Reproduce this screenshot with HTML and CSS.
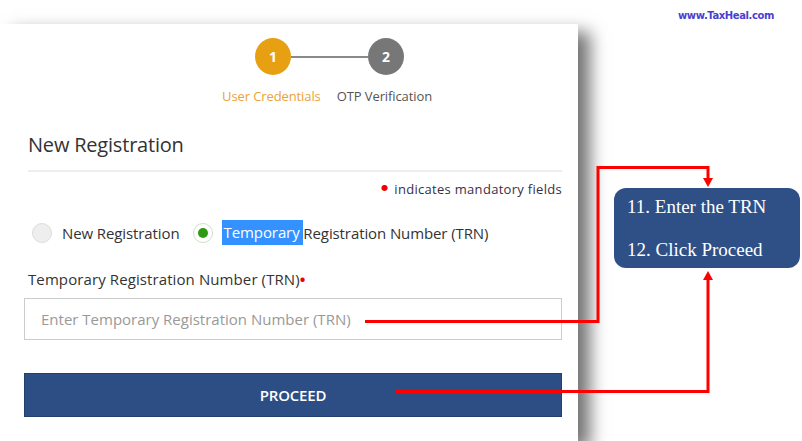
FILE: index.html
```html
<!DOCTYPE html>
<html>
<head>
<meta charset="utf-8">
<link rel="stylesheet" href="styles.css">
</head>
<body>
<div class="page">
  <div class="card">
    <div class="stepper">
      <div class="circles">
        <span class="circle active">1</span>
        <span class="bar"></span>
        <span class="circle">2</span>
      </div>
      <div class="labels">
        <span class="lbl active">User Credentials</span>
        <span class="lbl">OTP Verification</span>
      </div>
    </div>
    <h2 class="title">New Registration</h2>
    <p class="mandatory"><span class="dot">●</span> indicates mandatory fields</p>
    <div class="radios">
      <label class="radio"><span class="rb"></span>New Registration</label>
      <label class="radio"><span class="rb checked"></span><span class="hl">Temporary </span>Registration Number (TRN)</label>
    </div>
    <div class="field-label">Temporary Registration Number (TRN)<span class="req">•</span></div>
    <div class="input">Enter Temporary Registration Number (TRN)</div>
    <div class="button">PROCEED</div>
  </div>

  <div class="watermark">www.TaxHeal.com</div>

  <div class="callout">
    <p>11. Enter the TRN</p>
    <p>12. Click Proceed</p>
  </div>

  <svg class="arrows" width="802" height="441" viewBox="0 0 802 441">
    <path d="M365 321.5 H598 V167.5 H708 V180" fill="none" stroke="#ff0000" stroke-width="3"/>
    <polygon points="703,178 713,178 708,187" fill="#ff0000"/>
    <path d="M395 391.5 H708 V279" fill="none" stroke="#ff0000" stroke-width="3"/>
    <polygon points="703,280 713,280 708,271" fill="#ff0000"/>
  </svg>
</div>
</body>
</html>
```
FILE: styles.css
```css
* { box-sizing: border-box; }
html, body { margin: 0; padding: 0; background: #fff; }
body { width: 802px; height: 441px; overflow: hidden; font-family: "Open Sans", "DejaVu Sans", sans-serif; }
.page { position: relative; width: 802px; height: 441px; padding-top: 24px; }

.card {
  width: 578px;
  height: 417px;
  background: #fff;
  padding: 14px 16px 0 24px;
  box-shadow: 12px 8px 16px rgba(0,0,0,0.55);
}

.stepper { display: flex; flex-direction: column; }
.circles { display: flex; align-items: center; margin-left: 231px; }
.circle {
  width: 36px; height: 37px; border-radius: 50%;
  background: #777; color: #fff;
  display: flex; align-items: center; justify-content: center;
  font-size: 14px; font-weight: 700;
}
.circle.active { background: #e8a013; }
.bar { width: 77px; height: 2px; background: #8a8a8a; }
.labels { display: flex; gap: 16px; margin-left: 198px; margin-top: 12px; }
.lbl { font-size: 13px; color: #555; letter-spacing: -0.1px; }
.lbl.active { color: #eba23a; }

.title {
  margin: 26px 0 0 4px;
  padding-bottom: 12px;
  border-bottom: 2px solid #eeeeee;
  font-size: 20px; font-weight: 400; color: #333;
  letter-spacing: -0.2px;
}
.mandatory {
  margin: 8px 0 0; text-align: right;
  font-size: 13px; color: #3a2f45; letter-spacing: 0.3px;
}
.dot { color: #e00; font-size: 8px; vertical-align: 4px; margin-right: 2px; }

.radios { display: flex; gap: 13px; margin: 22px 0 0 8px; align-items: center; }
.radio { display: flex; align-items: center; font-size: 15px; color: #333; letter-spacing: -0.1px; }
.rb {
  width: 20px; height: 20px; border-radius: 50%;
  background: #eee; border: 1px solid #ddd;
  margin-right: 10px; display: inline-flex; align-items: center; justify-content: center;
}
.rb.checked { background: #fff; border: 1px solid #cfe0c8; margin-right: 9px; }
.rb.checked::after { content: ""; width: 10px; height: 10px; border-radius: 50%; background: #2e9a14; }
.hl { background: #3392ff; color: #fff; padding: 2px 0 3px 2px; white-space: pre; }

.field-label { margin: 24px 0 0 4px; font-size: 15px; color: #333; letter-spacing: 0.1px; }
.req { color: #e00; font-weight: 700; }
.input {
  margin-top: 9px;
  height: 42px;
  border: 1px solid #ccc;
  padding: 0 16px;
  display: flex; align-items: center;
  font-size: 15px; color: #999; letter-spacing: 0;
}
.button {
  margin-top: 33px;
  height: 44px;
  background: #2c4e85;
  border: 1px solid #22406e;
  color: #fff;
  display: flex; align-items: center; justify-content: center;
  font-size: 15px; font-weight: 600; letter-spacing: -0.2px;
}

.watermark {
  position: absolute; left: 678px; top: 10px;
  font-family: "DejaVu Sans", sans-serif; font-size: 10px; font-weight: 700;
  letter-spacing: -0.4px;
  color: #4a3fd0;
}
.callout {
  position: absolute; left: 614px; top: 188px;
  width: 186px; height: 80px;
  background: #2e5087; border-radius: 12px;
  padding: 8px 0 0 13px;
  color: #fff;
  font-family: "Liberation Serif", serif; font-size: 19px;
}
.callout p { margin: 0; line-height: 22px; }
.callout p + p { margin-top: 21px; }
.arrows { position: absolute; left: 0; top: 0; }
```
